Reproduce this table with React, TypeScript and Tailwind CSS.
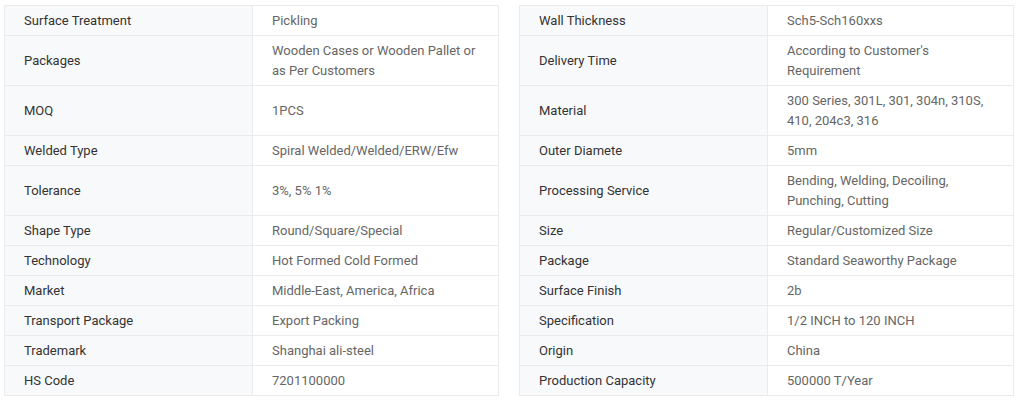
const rows: [string, string, string, string][] = [
  ["Surface Treatment", "Pickling", "Wall Thickness", "Sch5-Sch160xxs"],
  ["Packages", "Wooden Cases or Wooden Pallet or as Per Customers", "Delivery Time", "According to Customer's Requirement"],
  ["MOQ", "1PCS", "Material", "300 Series, 301L, 301, 304n, 310S, 410, 204c3, 316"],
  ["Welded Type", "Spiral Welded/Welded/ERW/Efw", "Outer Diamete", "5mm"],
  ["Tolerance", "3%, 5% 1%", "Processing Service", "Bending, Welding, Decoiling, Punching, Cutting"],
  ["Shape Type", "Round/Square/Special", "Size", "Regular/Customized Size"],
  ["Technology", "Hot Formed Cold Formed", "Package", "Standard Seaworthy Package"],
  ["Market", "Middle-East, America, Africa", "Surface Finish", "2b"],
  ["Transport Package", "Export Packing", "Specification", "1/2 INCH to 120 INCH"],
  ["Trademark", "Shanghai ali-steel", "Origin", "China"],
  ["HS Code", "7201100000", "Production Capacity", "500000 T/Year"],
];

function Half({ label, value, first }: { label: string; value: string; first: boolean }) {
  return (
    <div className={`grid w-[495px] grid-cols-[248px_1fr] border-l border-[#ebebeb] ${first ? "border-t" : ""}`}>
      <div className="flex items-center border-r border-b border-[#ebebeb] bg-[#f8f9fb] pt-[5px] pb-[4px] pl-[19px] pr-5 text-[#333333]">
        {label}
      </div>
      <div className="flex items-center border-r border-b border-[#ebebeb] pt-[5px] pb-[4px] pl-[19px] pr-5 text-[#666666]">
        {value}
      </div>
    </div>
  );
}

export default function App() {
  return (
    <div
      className="min-h-[409px] bg-white pt-[5px] pl-[4px] text-[13px] leading-5"
      style={{ fontFamily: "Roboto, 'Liberation Sans', sans-serif" }}
    >
      {rows.map(([l1, v1, l2, v2], i) => (
        <div key={l1} className="flex gap-5">
          <Half label={l1} value={v1} first={i === 0} />
          <Half label={l2} value={v2} first={i === 0} />
        </div>
      ))}
    </div>
  );
}
